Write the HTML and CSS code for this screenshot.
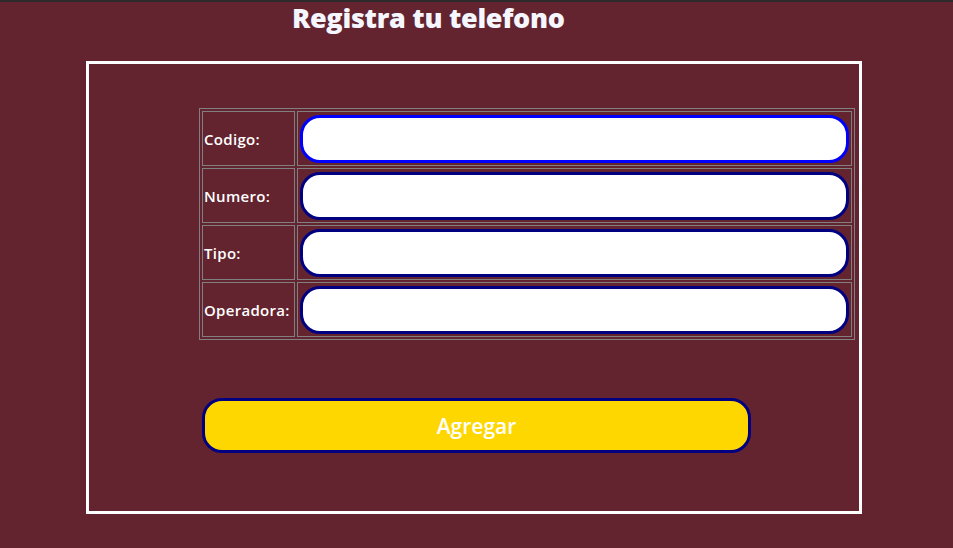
FILE: index.html
```html
<!DOCTYPE html>
<html lang="es">
<head>
<meta charset="utf-8">
<title>Registra tu telefono</title>
<link rel="stylesheet" href="styles.css">
</head>
<body>
<h1 class="title">Registra tu telefono</h1>
<div class="box">
  <form class="form">
    <table class="grid">
      <tr>
        <td class="label">Codigo:</td>
        <td class="field"><input class="input focused" type="text"></td>
      </tr>
      <tr>
        <td class="label">Numero:</td>
        <td class="field"><input class="input" type="text"></td>
      </tr>
      <tr>
        <td class="label">Tipo:</td>
        <td class="field"><input class="input" type="text"></td>
      </tr>
      <tr>
        <td class="label">Operadora:</td>
        <td class="field"><input class="input" type="text"></td>
      </tr>
    </table>
    <button class="btn" type="button">Agregar</button>
  </form>
</div>
</body>
</html>
```
FILE: styles.css
```css
html, body {
  margin: 0;
  padding: 0;
}
body {
  background: #63242f;
  border-top: 2px solid #2e2a2b;
  min-height: 546px;
  font-family: "Open Sans", "Noto Sans", sans-serif;
  color: #ffffff;
}
.title {
  margin: 0;
  padding: 2px 0 0 292px;
  height: 29px;
  font-family: "Open Sans", sans-serif;
  font-weight: 800;
  font-size: 27px;
  line-height: 28px;
  color: #f6f6ff;
  letter-spacing: -0.3px;
}
.box {
  margin: 28px 0 0 86px;
  width: 770px;
  height: 447px;
  border: 3px solid #ffffff;
}
.form {
  padding-top: 44px;
}
.grid {
  margin-left: 110px;
  border: 1px solid #808080;
  border-spacing: 2px;
}
.grid td {
  border: 1px solid #808080;
  height: 51px;
}
.label {
  width: 89px;
  padding: 1px;
  font-family: "Open Sans", sans-serif;
  font-weight: 600;
  font-size: 15px;
  letter-spacing: 0.3px;
  color: #ffffff;
  white-space: nowrap;
}
.field {
  padding: 1px 2px;
}
.input {
  display: block;
  box-sizing: border-box;
  width: 549px;
  height: 48px;
  border: 3px solid #000080;
  border-radius: 20px;
  background: #ffffff;
  padding: 0 12px;
  font-size: 16px;
  outline: none;
}
.input.focused {
  border-color: #0000ff;
}
.btn {
  display: block;
  box-sizing: border-box;
  margin: 58px 0 0 113px;
  width: 549px;
  height: 55px;
  background: #ffd700;
  border: 3px solid #000080;
  border-radius: 20px;
  color: #ffffff;
  font-family: "Open Sans", sans-serif;
  font-weight: 600;
  font-size: 21px;
  padding: 0;
}
```
